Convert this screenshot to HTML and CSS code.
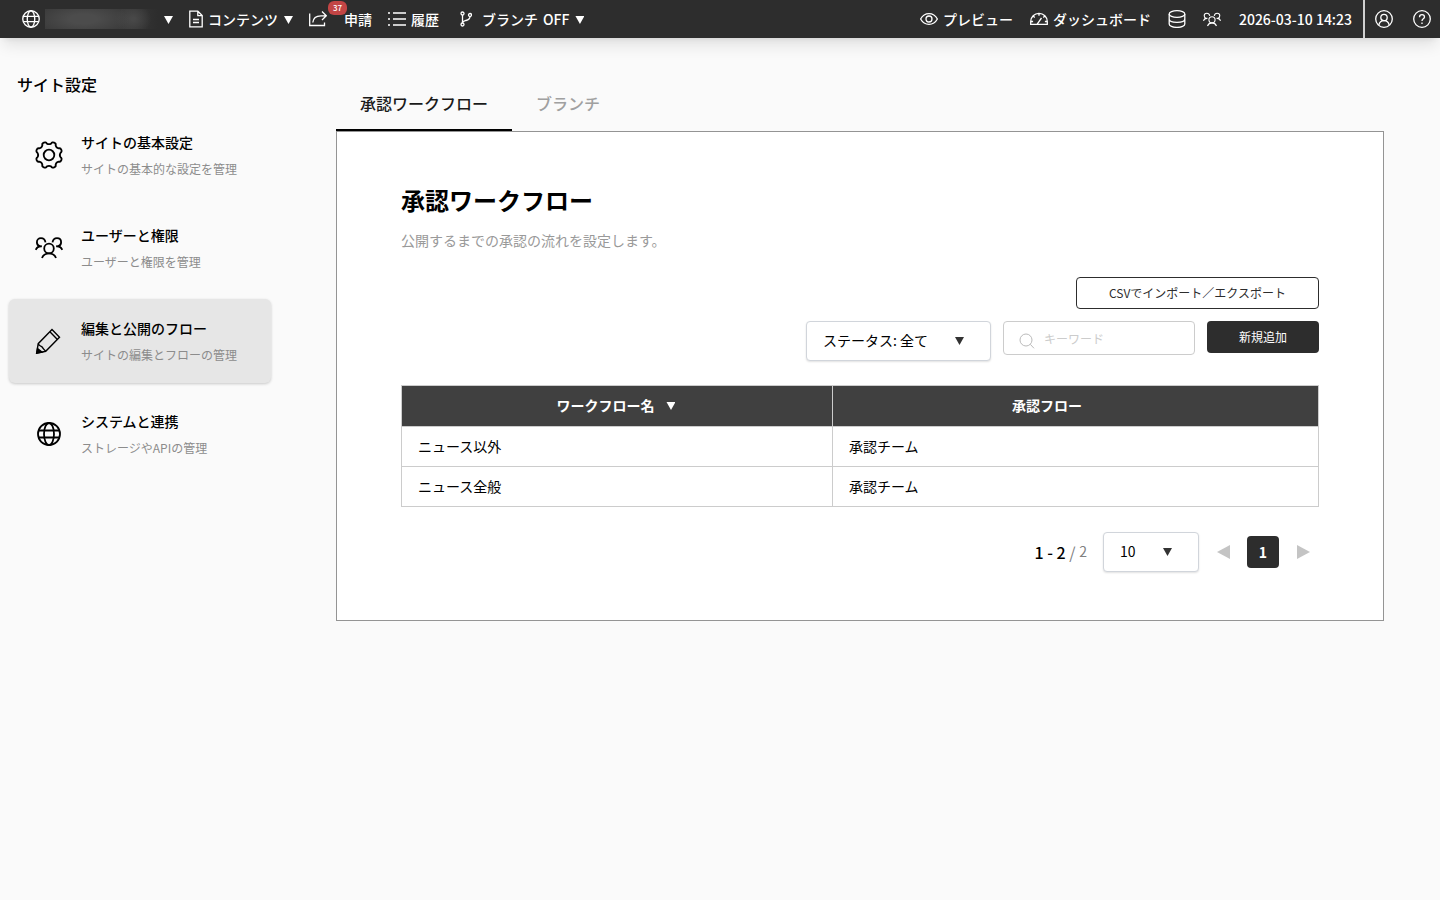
FILE: index.html
```
<!DOCTYPE html>
<html lang="ja">
<head>
  <meta charset="UTF-8">
  <meta name="viewport" content="width=device-width, initial-scale=1.0">
  <title>承認ワークフロー</title>
  <link rel="stylesheet" href="styles.css">
</head>
<body>
  <!-- shared icons -->
  <svg class="icon-defs" width="0" height="0" aria-hidden="true">
    <symbol id="icon-globe" viewBox="0 0 24 24">
      <circle cx="12" cy="12" r="11"/>
      <ellipse cx="12" cy="12" rx="5" ry="11"/>
      <path d="M2 8.500h20M2 15.500h20"/>
    </symbol>
    <symbol id="icon-users" viewBox="0 0 28 22">
      <circle cx="14" cy="11.500" r="4.800"/>
      <path d="M7 21c1.200-3 3.800-4.700 7-4.700s5.800 1.700 7 4.700"/>
      <path d="M10.500 5.300C10 2.700 8.200 1.200 6 1.200 3.500 1.200 1.900 3 1.900 5.200c0 2 1.100 3.500 3 4.100M6.900 9.300C4 9 1.800 10.300.7 12.800"/>
      <path d="M17.500 5.300c.5-2.600 2.300-4.100 4.500-4.100 2.500 0 4.100 1.800 4.100 4 0 2-1.100 3.500-3 4.100M21.100 9.300c2.900-.3 5.100 1 6.200 3.500"/>
    </symbol>
  </svg>

  <header class="header">
    <nav class="header-left">
      <button type="button" class="header-item" aria-label="サイト">
        <svg class="icon icon-site"><use href="#icon-globe"/></svg>
        <span class="site-name"></span>
        <span class="caret"></span>
      </button>
      <button type="button" class="header-item">
        <svg class="icon icon-doc" viewBox="0 0 14 18"><path d="M.8 1.200h8l4.400 4.400v11.200H.8zM8.800 1.200v4.400h4.400M4 9.500h6M4 12.500h6"/></svg>
        <span>コンテンツ</span>
        <span class="caret"></span>
      </button>
      <a href="#" class="header-item request">
        <svg class="icon" viewBox="0 0 18 18"><path d="M.7 3.500v12h14.800v-3M3.800 12.500C4.200 8 7.500 5.800 12 5.800h5M13 1.500l4.300 4.300L13 10"/></svg>
        <span class="badge">37</span>
        <span>申請</span>
      </a>
      <a href="#" class="header-item">
        <svg class="icon" viewBox="0 0 18 18"><path d="M5 3h13M5 9h13M5 15h13"/><path d="M0 3h2M0 9h2M0 15h2"/></svg>
        <span>履歴</span>
      </a>
      <button type="button" class="header-item branch">
        <svg class="icon icon-branch" viewBox="0 0 12 18"><circle cx="2.500" cy="3.500" r="1.500"/><circle cx="2.500" cy="14.500" r="1.500"/><circle cx="10" cy="5" r="1.500"/><path d="M2.500 5v8M10 6.500c0 3.400-2.600 3.600-4.800 4.200-1.500.4-2.300 1-2.700 2.100"/></svg>
        <span>ブランチ</span>
        <span>OFF</span>
        <span class="caret"></span>
      </button>
    </nav>
    <div class="header-right">
      <a href="#" class="header-item">
        <svg class="icon" viewBox="0 0 18 18"><path d="M.6 9C2.500 5.600 5.500 3.700 9 3.700s6.500 1.900 8.400 5.300c-1.900 3.400-4.900 5.300-8.400 5.300S2.500 12.400.6 9z"/><circle cx="9" cy="9" r="3"/></svg>
        <span>プレビュー</span>
      </a>
      <a href="#" class="header-item">
        <svg class="icon" viewBox="0 0 18 18"><path d="M.7 14.300V11.500C.7 6.900 4.400 3.300 9 3.300s8.300 3.600 8.300 8.200v2.800zM7 14.300L11.500 8M9 3.500v2.300M3.200 6l1.500 1.500M14.800 6l-1.500 1.500M.9 11.500h2.200M14.900 11.500h2.200"/></svg>
        <span>ダッシュボード</span>
      </a>
      <button type="button" class="header-item" aria-label="ストレージ">
        <svg class="icon" viewBox="0 0 18 18"><ellipse cx="9" cy="4" rx="7.800" ry="3.300"/><path d="M1.200 4v10c0 1.900 3.400 3.400 7.800 3.400s7.800-1.500 7.800-3.400V4M1.200 9c0 1.900 3.400 3.300 7.800 3.300s7.800-1.400 7.800-3.300"/></svg>
      </button>
      <button type="button" class="header-item" aria-label="ユーザー">
        <svg class="icon icon-members"><use href="#icon-users"/></svg>
      </button>
      <time class="clock" datetime="2026-03-10T14:23">2026-03-10 14:23</time>
      <div class="header-account">
        <button type="button" class="header-item" aria-label="アカウント">
          <svg class="icon" viewBox="0 0 18 18"><circle cx="9" cy="9" r="8.300"/><circle cx="9" cy="7.500" r="3.200"/><path d="M3.800 15.200c.6-2.800 2.600-4.500 5.200-4.500s4.600 1.700 5.200 4.500"/></svg>
        </button>
        <button type="button" class="header-item" aria-label="ヘルプ">
          <svg class="icon" viewBox="0 0 18 18"><circle cx="9" cy="9" r="8.300"/><path d="M6.500 7.200C6.500 5.700 7.500 4.700 9 4.700s2.500 1 2.500 2.300c0 1.800-2.500 1.900-2.500 3.900M9 12.500v1.600"/></svg>
        </button>
      </div>
    </div>
  </header>

  <div class="layout">
    <aside class="sidebar">
      <h2 class="sidebar-title">サイト設定</h2>
      <nav class="side-menu">
        <a href="#" class="side-item">
          <svg class="side-icon" viewBox="0 0 28 28"><circle cx="14" cy="14" r="5.300"/><path d="M16.300 2.400C17.200.2 21.500 2 20.600 4.200Q21.100 6.900 23.800 7.400C26 6.500 27.800 10.800 25.600 11.700Q24 14 25.600 16.300C27.800 17.200 26 21.500 23.800 20.600Q21.100 21.100 20.600 23.800C21.500 26 17.200 27.800 16.300 25.600Q14 24 11.700 25.600C10.800 27.800 6.500 26 7.400 23.800Q6.900 21.100 4.200 20.600C2 21.500.2 17.200 2.400 16.300Q4 14 2.400 11.700C.2 10.800 2 6.500 4.200 7.400Q6.900 6.900 7.400 4.200C6.500 2 10.800.2 11.700 2.400Q14 4 16.300 2.400z"/></svg>
          <span class="side-text">
            <span class="side-name">サイトの基本設定</span>
            <span class="side-desc">サイトの基本的な設定を管理</span>
          </span>
        </a>
        <a href="#" class="side-item">
          <svg class="side-icon"><use href="#icon-users"/></svg>
          <span class="side-text">
            <span class="side-name">ユーザーと権限</span>
            <span class="side-desc">ユーザーと権限を管理</span>
          </span>
        </a>
        <a href="#" class="side-item active" aria-current="page">
          <svg class="side-icon thin" viewBox="0 0 28 28"><path d="M17 2.500l7.500 7.700L10.700 24.300 1.700 26.200 3.200 16.700zM14.900 4.700l7.500 7.700M3.200 16.700c1 2 1.900 2.300 3.800 3.200 1 1.500 2 2.700 3.700 4.400"/><path class="fill" d="M2.500 21.500l4.500 3.700-5.300 1z"/></svg>
          <span class="side-text">
            <span class="side-name">編集と公開のフロー</span>
            <span class="side-desc">サイトの編集とフローの管理</span>
          </span>
        </a>
        <a href="#" class="side-item">
          <svg class="side-icon side-globe"><use href="#icon-globe"/></svg>
          <span class="side-text">
            <span class="side-name">システムと連携</span>
            <span class="side-desc">ストレージやAPIの管理</span>
          </span>
        </a>
      </nav>
    </aside>

    <main class="main">
      <nav class="tabs">
        <a href="#" class="tab active">承認ワークフロー</a>
        <a href="#" class="tab">ブランチ</a>
      </nav>
      <section class="panel">
        <h1 class="panel-title">承認ワークフロー</h1>
        <p class="panel-desc">公開するまでの承認の流れを設定します。</p>

        <div class="toolbar">
          <button type="button" class="btn btn-outline">CSVでインポート／エクスポート</button>
        </div>
        <div class="toolbar">
          <div class="select-box">
            <select class="select status-select" aria-label="ステータス">
              <option>ステータス: 全て</option>
            </select>
            <span class="caret"></span>
          </div>
          <label class="search">
            <svg class="search-icon" viewBox="0 0 16 16"><circle cx="7" cy="7" r="6"/><path d="M11.300 11.300L15 15.300"/></svg>
            <input type="text" placeholder="キーワード" aria-label="キーワード">
          </label>
          <button type="button" class="btn btn-primary">新規追加</button>
        </div>

        <table class="table">
          <thead>
            <tr>
              <th class="col-name">ワークフロー名<span class="caret"></span></th>
              <th class="col-flow">承認フロー</th>
            </tr>
          </thead>
          <tbody>
            <tr>
              <td>ニュース以外</td>
              <td>承認チーム</td>
            </tr>
            <tr>
              <td>ニュース全般</td>
              <td>承認チーム</td>
            </tr>
          </tbody>
        </table>

        <div class="pagination">
          <p class="page-count">1 - 2 <span class="slash">/</span> <span class="total">2</span></p>
          <div class="select-box">
            <select class="select size-select" aria-label="表示件数">
              <option>10</option>
            </select>
            <span class="caret"></span>
          </div>
          <button type="button" class="page-btn" aria-label="前へ"><span class="arrow arrow-prev"></span></button>
          <button type="button" class="page-btn current">1</button>
          <button type="button" class="page-btn" aria-label="次へ"><span class="arrow arrow-next"></span></button>
        </div>
      </section>
    </main>
  </div>
</body>
</html>
```
FILE: styles.css
```
* {
  box-sizing: border-box;
}

body {
  margin: 0;
  font-family: "Noto Sans CJK JP", sans-serif;
  font-size: 14px;
  color: #000;
  background-color: #fafafa;
}

a {
  color: inherit;
  text-decoration: none;
}

button,
input,
select {
  font-family: inherit;
  color: inherit;
}

button {
  padding: 0;
  border: none;
  background: none;
  cursor: pointer;
}

.icon-defs {
  position: absolute;
}

.caret {
  flex: none;
  width: 9px;
  height: 8px;
  background-color: currentColor;
  clip-path: polygon(0 0, 100% 0, 50% 100%);
}

/* Header */
.header {
  display: flex;
  justify-content: space-between;
  height: 38px;
  padding-left: 22px;
  color: #fff;
  background-color: #2d2d2d;
  box-shadow: 0 10px 15px -3px rgba(0, 0, 0, 0.1), 0 4px 6px -4px rgba(0, 0, 0, 0.1);
}

.header-left,
.header-right,
.header-account {
  display: flex;
  align-items: center;
}

.header-left {
  gap: 16px;
}

.header-right {
  gap: 17px;
}

.header-item {
  position: relative;
  display: flex;
  align-items: center;
  gap: 5px;
  font-size: 14px;
  font-weight: 500;
  line-height: 20px;
  white-space: nowrap;
}

.header-item .caret {
  margin: 2px 0 0 1px;
}

.icon {
  flex: none;
  width: 18px;
  height: 18px;
  fill: none;
  stroke: currentColor;
  stroke-width: 1.3;
}

.icon-site {
  stroke-width: 1.8;
}

.icon-doc {
  width: 14px;
}

.icon-branch {
  width: 12px;
  margin-right: 5px;
}

.icon-members {
  height: 15px;
  stroke-width: 1.7;
}

/* Masked site name */
.site-name {
  width: 113px;
  height: 20px;
  background:
    radial-gradient(ellipse 46px 16px at 34% 50%, #4c4c4c 30%, transparent),
    radial-gradient(ellipse 18px 16px at 78% 50%, #484848 10%, transparent),
    linear-gradient(90deg, #3c3c3c 65%, #2d2d2d);
}

.request {
  gap: 17px;
}

.badge {
  position: absolute;
  left: 19px;
  top: -8px;
  padding: 0 5px;
  border-radius: 6px;
  font-size: 8px;
  line-height: 14px;
  background-color: #c24545;
}

.branch {
  margin-left: 5px;
}

.clock {
  margin-left: 1px;
  font-weight: 500;
  line-height: 20px;
}

.header-account {
  height: 38px;
  gap: 20px;
  margin-left: -6px;
  padding: 0 9px 0 10px;
  border-left: 2px solid #d0d0d0;
}

/* Layout */
.layout {
  display: flex;
}

.sidebar {
  flex: none;
  width: 280px;
  padding: 31px 9px;
}

.sidebar-title {
  margin: 0 0 14px;
  padding: 0 8px;
  font-size: 16px;
  font-weight: 500;
  line-height: 30px;
}

.side-menu {
  display: flex;
  flex-direction: column;
  gap: 9px;
}

.side-item {
  display: flex;
  align-items: center;
  gap: 18px;
  padding: 16px 0 16px 26px;
  border-radius: 6px;
}

.side-item.active {
  background-color: #e6e6e6;
  box-shadow: 0 1px 3px rgba(0, 0, 0, 0.2);
}

.side-icon {
  flex: none;
  width: 28px;
  height: 28px;
  fill: none;
  stroke: #000;
  stroke-width: 1.8;
}

.side-icon.thin {
  stroke-width: 1.4;
}

.side-icon .fill {
  fill: #000;
}

.side-globe {
  padding: 2px;
}

.side-text {
  display: flex;
  flex-direction: column;
  gap: 2px;
}

.side-name {
  font-weight: 500;
  line-height: 26px;
}

.side-desc {
  font-size: 12px;
  line-height: 24px;
  color: #8c8c8c;
}

.main {
  flex: 1;
  padding: 39px 56px;
}

/* Tabs */
.tabs {
  display: flex;
}

.tab {
  padding: 12px 24px;
  border-bottom: 2px solid transparent;
  font-size: 16px;
  font-weight: 500;
  line-height: 28px;
  color: #a0a0a0;
}

.tab.active {
  border-color: #000;
  color: #1a1a1a;
}

/* Panel */
.panel {
  padding: 48px 64px;
  border: 1px solid #949494;
  background-color: #fff;
}

.panel-title {
  margin: 0 0 8px;
  font-size: 24px;
  font-weight: 700;
  line-height: 40px;
}

.panel-desc {
  margin: 0 0 25px;
  line-height: 24px;
  color: #999;
}

.toolbar {
  display: flex;
  justify-content: flex-end;
  align-items: flex-start;
  gap: 12px;
  margin-bottom: 12px;
}

.btn {
  height: 32px;
  padding: 0 32px 2px;
  border-radius: 4px;
  font-size: 12px;
}

.btn-outline {
  border: 1px solid #2d2d2d;
  color: #2d2d2d;
}

.btn-primary {
  color: #fff;
  background-color: #2d2d2d;
}

.select-box {
  position: relative;
}

.select-box .caret {
  position: absolute;
  right: 27px;
  top: 16px;
  color: #333;
  pointer-events: none;
}

.select {
  display: block;
  height: 40px;
  padding: 0 16px 2px;
  border: 1px solid #d1d5db;
  border-radius: 4px;
  font-size: 14px;
  background-color: #fff;
  box-shadow: 0 1px 2px rgba(0, 0, 0, 0.12);
  appearance: none;
}

.status-select {
  width: 185px;
}

.size-select {
  width: 96px;
}

.search {
  display: flex;
  align-items: center;
  gap: 9px;
  width: 192px;
  height: 34px;
  padding: 0 15px;
  border: 1px solid #ccc;
  border-radius: 4px;
}

.search-icon {
  flex: none;
  width: 16px;
  height: 16px;
  margin-top: 6px;
  fill: none;
  stroke: #bbb;
}

.search input {
  width: 100%;
  min-width: 0;
  padding: 0;
  border: none;
  outline: none;
  font-size: 12px;
  background: none;
}

.search input::placeholder {
  color: #ccc;
}

/* Table */
.table {
  width: 100%;
  margin: 24px 0 25px;
  border-collapse: collapse;
  table-layout: fixed;
}

.table th,
.table td {
  padding: 9px 16px 10px;
  border: 1px solid #ccc;
  line-height: 20px;
  text-align: left;
}

.table th {
  padding-bottom: 11px;
  font-weight: 700;
  text-align: center;
  color: #fff;
  background-color: #404040;
}

.table .col-name {
  width: 47%;
  padding-right: 18px;
}

.table .col-flow {
  padding-right: 73px;
}

.table .caret {
  display: inline-block;
  margin-left: 12px;
  vertical-align: 1px;
}

/* Pagination */
.pagination {
  display: flex;
  justify-content: flex-end;
  align-items: center;
  gap: 8px;
}

.page-count {
  margin: 0 8px 0 0;
  font-size: 16px;
  font-weight: 500;
}

.page-count .slash,
.page-count .total {
  font-weight: 400;
  color: #808080;
}

.page-count .total {
  font-size: 14px;
  vertical-align: 2px;
}

.page-btn {
  display: flex;
  justify-content: center;
  align-items: center;
  width: 32px;
  height: 32px;
  border-radius: 4px;
  font-size: 14px;
}

.page-btn.current {
  font-weight: 700;
  color: #fff;
  background-color: #2d2d2d;
}

.arrow {
  border-top: 7px solid transparent;
  border-bottom: 7px solid transparent;
}

.arrow-prev {
  border-right: 13px solid #c4c4c4;
}

.arrow-next {
  border-left: 13px solid #c4c4c4;
}
```
